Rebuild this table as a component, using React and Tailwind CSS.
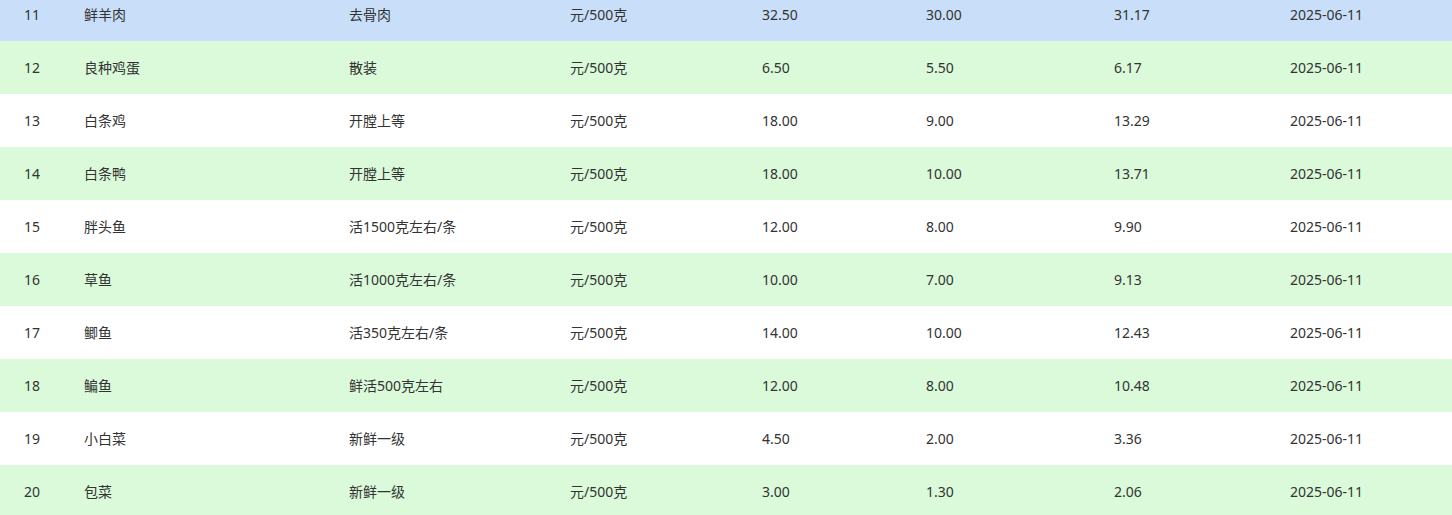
const rows = [
  ["11", "鲜羊肉", "去骨肉", "元/500克", "32.50", "30.00", "31.17", "2025-06-11"],
  ["12", "良种鸡蛋", "散装", "元/500克", "6.50", "5.50", "6.17", "2025-06-11"],
  ["13", "白条鸡", "开膛上等", "元/500克", "18.00", "9.00", "13.29", "2025-06-11"],
  ["14", "白条鸭", "开膛上等", "元/500克", "18.00", "10.00", "13.71", "2025-06-11"],
  ["15", "胖头鱼", "活1500克左右/条", "元/500克", "12.00", "8.00", "9.90", "2025-06-11"],
  ["16", "草鱼", "活1000克左右/条", "元/500克", "10.00", "7.00", "9.13", "2025-06-11"],
  ["17", "鲫鱼", "活350克左右/条", "元/500克", "14.00", "10.00", "12.43", "2025-06-11"],
  ["18", "鳊鱼", "鲜活500克左右", "元/500克", "12.00", "8.00", "10.48", "2025-06-11"],
  ["19", "小白菜", "新鲜一级", "元/500克", "4.50", "2.00", "3.36", "2025-06-11"],
  ["20", "包菜", "新鲜一级", "元/500克", "3.00", "1.30", "2.06", "2025-06-11"],
];

export default function App() {
  return (
    <div
      className="w-[1452px] h-[515px] overflow-hidden bg-white text-[14px] text-[#333]"
      style={{ fontFamily: '"Noto Sans", "Noto Sans CJK SC", sans-serif' }}
    >
      <div className="-mt-[12px]">
        {rows.map((r, i) => (
          <div
            key={r[0]}
            className={
              "grid grid-cols-[84px_265px_221px_192px_164px_188px_176px_1fr] h-[53px] items-center " +
              (i === 0 ? "bg-[#c9dff9]" : i % 2 === 1 ? "bg-[#dafada]" : "bg-white")
            }
          >
            <div className="pl-[24px]">{r[0]}</div>
            {r.slice(1).map((c, j) => (
              <div key={j} className="whitespace-nowrap">{c}</div>
            ))}
          </div>
        ))}
      </div>
    </div>
  );
}
